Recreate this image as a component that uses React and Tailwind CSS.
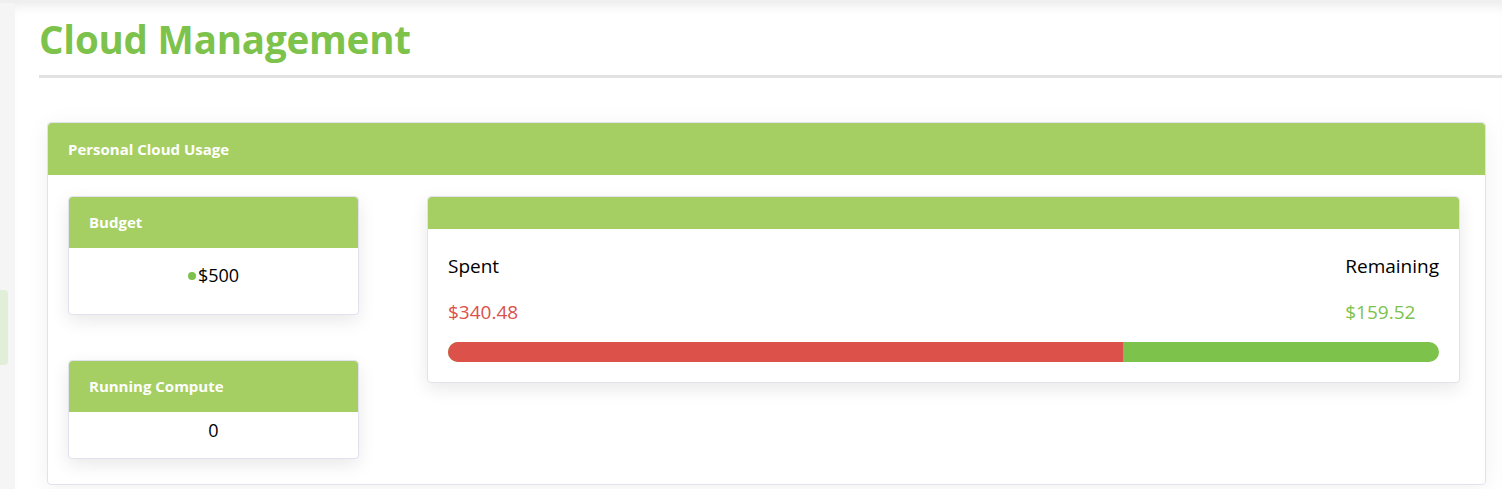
import React from "react";

const font = { fontFamily: '"Open Sans", "Noto Sans", sans-serif' };

function SmallCard({ title, children, bodyClass }) {
  return (
    <div className="w-[291px] rounded-[4px] border border-[#e2e2ee] bg-white shadow-[0_6px_18px_rgba(0,0,0,0.09)]">
      <div className="flex h-[51px] items-center rounded-t-[4px] bg-[#a5cf62] px-[20px] text-[15px] font-bold text-white">
        {title}
      </div>
      <div className={bodyClass}>{children}</div>
    </div>
  );
}

export default function App() {
  const spent = 340.48;
  const total = 500;
  const pct = (spent / total) * 100;
  return (
    <div className="flex min-h-[489px] bg-[#efefef] pt-[3px]" style={font}>
      <aside className="w-[15px] shrink-0 bg-[#f6f5f6] pt-[287px]">
        <div className="h-[75px] w-[8px] rounded-r-[4px] bg-[#e2efd8]" />
      </aside>
      <main className="flex-1 bg-white pb-[4px] shadow-[inset_0_10px_14px_-10px_rgba(0,0,0,0.12)]">
        <div className="pl-[24px] pt-[10px]">
          <h1 className="text-[38.5px] font-bold leading-[52px] tracking-[-0.2px] text-[#7dc24b]">
            Cloud Management
          </h1>
          <div className="mt-[10px] h-[3px] bg-[#e2e2e2]" />
        </div>
        <section className="ml-[32px] mr-[16px] mt-[44px] rounded-[4px] border border-[#e2e2ee] bg-white shadow-[0_4px_24px_rgba(0,0,0,0.06)]">
          <div className="flex h-[52px] items-center rounded-t-[4px] bg-[#a5cf62] px-[20px] text-[15px] font-bold text-white">
            Personal Cloud Usage
          </div>
          <div className="flex gap-[68px] pb-[25px] pl-[20px] pr-[25px] pt-[21px]">
            <div className="flex flex-col gap-[45px]">
              <SmallCard
                title="Budget"
                bodyClass="flex h-[66px] items-start justify-center pt-[14px] text-[18px] text-black"
              >
                <span className="mr-[2px] mt-[10px] inline-block h-[8px] w-[8px] rounded-full bg-[#7dc24b]" />
                <span>$500</span>
              </SmallCard>
              <SmallCard
                title="Running Compute"
                bodyClass="flex h-[46px] items-start justify-center pt-[5px] text-[18px] text-black"
              >
                0
              </SmallCard>
            </div>
            <div className="h-[187px] flex-1 rounded-[4px] border border-[#e2e2ee] bg-white shadow-[0_6px_18px_rgba(0,0,0,0.09)]">
              <div className="h-[32px] rounded-t-[4px] bg-[#a5cf62]" />
              <div className="px-[20px] pt-[25px]">
                <div className="flex justify-between text-[19px]">
                  <div>
                    <div className="leading-[24px] text-black">Spent</div>
                    <div className="mt-[22px] leading-[24px] text-[#dc5149]">$340.48</div>
                  </div>
                  <div>
                    <div className="leading-[24px] text-black">Remaining</div>
                    <div className="mt-[22px] leading-[24px] text-[#7dc24b]">$159.52</div>
                  </div>
                </div>
                <div className="mt-[18px] flex h-[20px] overflow-hidden rounded-full bg-[#7dc24b]">
                  <div className="h-full bg-[#dc5149]" style={{ width: `${pct}%` }} />
                </div>
              </div>
            </div>
          </div>
        </section>
      </main>
    </div>
  );
}
